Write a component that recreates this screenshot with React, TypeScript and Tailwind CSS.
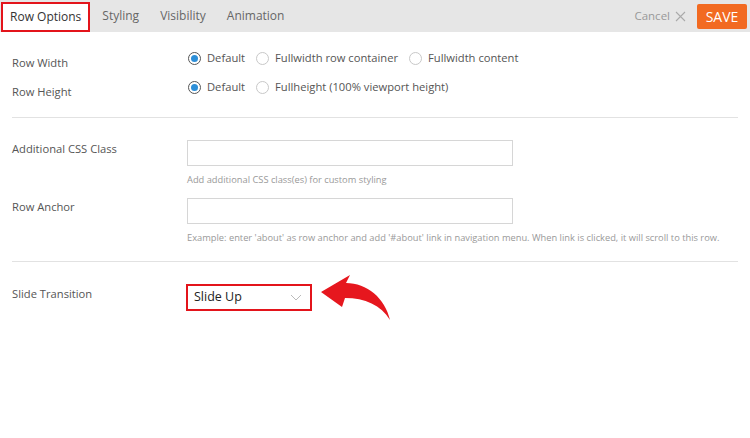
import React from 'react';

const Radio: React.FC<{ checked?: boolean; label: string }> = ({ checked, label }) => (
  <label className="flex items-center gap-[6px] mr-[11px]">
    <span
      className={`flex items-center justify-center w-[13px] h-[13px] rounded-full border ${
        checked ? 'border-[#555]' : 'border-[#c8c8c8]'
      } bg-white`}
    >
      {checked && <span className="w-[7px] h-[7px] rounded-full bg-[#2d8fd8]" />}
    </span>
    <span>{label}</span>
  </label>
);

const App: React.FC = () => {
  return (
    <div className="w-[750px] h-[438px] bg-white overflow-hidden" style={{ fontFamily: '"Open Sans", sans-serif' }}>
      {/* header */}
      <div className="flex items-center h-[32px] bg-[#e6e6e6]">
        <div className="flex items-end h-full pl-[1px]">
          <div className="h-[30px] px-[7px] flex items-center border-2 border-[#e3141b] bg-white text-[12px] text-[#333]">
            Row Options
          </div>
        </div>
        <div className="flex items-center gap-[21px] ml-[12px] text-[12px] text-[#666]">
          <span>Styling</span>
          <span>Visibility</span>
          <span>Animation</span>
        </div>
        <div className="ml-auto flex items-center mr-[3px]">
          <span className="text-[11.5px] text-[#999]">Cancel</span>
          <svg className="ml-[5px]" width="11" height="11" viewBox="0 0 11 11" stroke="#aaa" strokeWidth="1.1" fill="none">
            <path d="M1 1L10 10M10 1L1 10" />
          </svg>
          <button className="ml-[11px] h-[25px] w-[50px] rounded-[2px] bg-[#f26a21] text-white text-[14px] flex items-center justify-center">
            SAVE
          </button>
        </div>
      </div>

      {/* body */}
      <div className="px-[12px] text-[11.2px] text-[#555]">
        <div className="pt-[18px] pb-[22px] border-b border-[#e2e2e2]">
          <div className="flex items-center h-[16px]">
            <div className="w-[176px] pt-[10px]">Row Width</div>
            <div className="flex items-center">
              <Radio checked label="Default" />
              <Radio label="Fullwidth row container" />
              <Radio label="Fullwidth content" />
            </div>
          </div>
          <div className="flex items-center h-[16px] mt-[13px]">
            <div className="w-[176px] pt-[10px]">Row Height</div>
            <div className="flex items-center">
              <Radio checked label="Default" />
              <Radio label="Fullheight (100% viewport height)" />
            </div>
          </div>
        </div>

        <div className="pt-[22px] pb-[16px] border-b border-[#e2e2e2]">
          <div className="flex items-start">
            <div className="w-[175px] pt-[1px]">Additional CSS Class</div>
            <div>
              <input className="block w-[326px] h-[26px] border border-[#d6d6d6] outline-none" />
              <div className="mt-[7px] text-[9.3px] text-[#999]">Add additional CSS class(es) for custom styling</div>
            </div>
          </div>
          <div className="flex items-start mt-[11px]">
            <div className="w-[175px] pt-[1px]">Row Anchor</div>
            <div>
              <input className="block w-[326px] h-[26px] border border-[#d6d6d6] outline-none" />
              <div className="mt-[7px] text-[9.3px] text-[#999] whitespace-nowrap">
                Example: enter 'about' as row anchor and add '#about' link in navigation menu. When link is clicked, it will scroll to this row.
              </div>
            </div>
          </div>
        </div>

        <div className="flex items-start pt-[22px] relative">
          <div className="w-[174px] pt-[2px]">Slide Transition</div>
          <div className="w-[126px] h-[27px] border-2 border-[#e3141b] flex items-center justify-between pl-[6px] pr-[8px] text-[12.5px] text-[#222]">
            <span>Slide Up</span>
            <svg width="12" height="7" viewBox="0 0 12 7" fill="none" stroke="#bbb" strokeWidth="1">
              <path d="M1 1L6 6L11 1" />
            </svg>
          </div>
          <svg className="absolute left-[303px] top-[8px]" width="80" height="55" viewBox="0 0 80 55">
            <path
              d="M6 22 L35 5 L31 13 C52 13 70 28 75 50 C66 35 50 28 30 28 L27 37 Z"
              fill="#e6171e"
            />
          </svg>
        </div>
      </div>
    </div>
  );
};

export default App;
